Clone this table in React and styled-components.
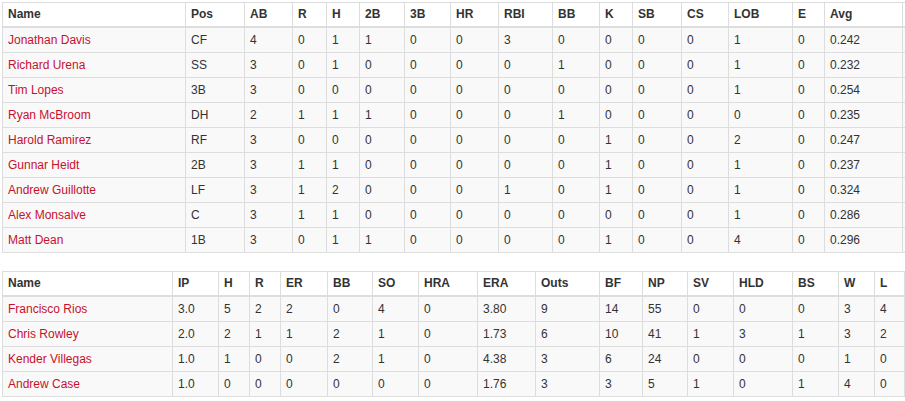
import React from "react";
import styled, { createGlobalStyle } from "styled-components";

const Global = createGlobalStyle`
  html, body { margin: 0; padding: 0; background: #fff; overflow: hidden; }
  body { font-family: "Liberation Sans", Arial, sans-serif; font-size: 12px; color: #333; }
`;

const Page = styled.div`
  padding: 2px 0 0 2px;
  display: flex;
  flex-direction: column;
  align-items: flex-start;
  gap: 18px;
`;

const Table = styled.table`
  border-collapse: collapse;
  table-layout: fixed;
  width: ${(p) => p.$width}px;
  border: 1px solid #ddd;
`;

const Th = styled.th`
  text-align: left;
  font-weight: bold;
  color: #333;
  background: #fff;
  padding: 4px 5px;
  line-height: 15px;
  border: 1px solid #ddd;
  border-bottom: 2px solid #ddd;
  white-space: nowrap;
  overflow: hidden;
`;

const Td = styled.td`
  padding: 4px 5px;
  line-height: 16px;
  background: #f9f9f9;
  border: 1px solid #ddd;
  white-space: nowrap;
  overflow: hidden;
`;

const PlayerLink = styled.a`
  color: #c8102e;
  text-decoration: none;
`;

const batHead = ["Name", "Pos", "AB", "R", "H", "2B", "3B", "HR", "RBI", "BB", "K", "SB", "CS", "LOB", "E", "Avg", ""];
const batWidths = [183, 59, 48, 34, 33, 45, 46, 48, 54, 47, 33, 49, 47, 64, 32, 78, 3];
const batRows = [
  ["Jonathan Davis", "CF", 4, 0, 1, 1, 0, 0, 3, 0, 0, 0, 0, 1, 0, "0.242"],
  ["Richard Urena", "SS", 3, 0, 1, 0, 0, 0, 0, 1, 0, 0, 0, 1, 0, "0.232"],
  ["Tim Lopes", "3B", 3, 0, 0, 0, 0, 0, 0, 0, 0, 0, 0, 1, 0, "0.254"],
  ["Ryan McBroom", "DH", 2, 1, 1, 1, 0, 0, 0, 1, 0, 0, 0, 0, 0, "0.235"],
  ["Harold Ramirez", "RF", 3, 0, 0, 0, 0, 0, 0, 0, 1, 0, 0, 2, 0, "0.247"],
  ["Gunnar Heidt", "2B", 3, 1, 1, 0, 0, 0, 0, 0, 1, 0, 0, 1, 0, "0.237"],
  ["Andrew Guillotte", "LF", 3, 1, 2, 0, 0, 0, 1, 0, 1, 0, 0, 1, 0, "0.324"],
  ["Alex Monsalve", "C", 3, 1, 1, 0, 0, 0, 0, 0, 0, 0, 0, 1, 0, "0.286"],
  ["Matt Dean", "1B", 3, 0, 1, 1, 0, 0, 0, 0, 1, 0, 0, 4, 0, "0.296"],
];

const pitHead = ["Name", "IP", "H", "R", "ER", "BB", "SO", "HRA", "ERA", "Outs", "BF", "NP", "SV", "HLD", "BS", "W", "L"];
const pitWidths = [170, 46, 31, 31, 47, 45, 46, 59, 58, 64, 43, 45, 46, 59, 46, 36, 30];
const pitRows = [
  ["Francisco Rios", "3.0", 5, 2, 2, 0, 4, 0, "3.80", 9, 14, 55, 0, 0, 0, 3, 4],
  ["Chris Rowley", "2.0", 2, 1, 1, 2, 1, 0, "1.73", 6, 10, 41, 1, 3, 1, 3, 2],
  ["Kender Villegas", "1.0", 1, 0, 0, 2, 1, 0, "4.38", 3, 6, 24, 0, 0, 0, 1, 0],
  ["Andrew Case", "1.0", 0, 0, 0, 0, 0, 0, "1.76", 3, 3, 5, 1, 0, 1, 4, 0],
];

function StatTable({ head, widths, rows, extra }) {
  const total = widths.reduce((a, b) => a + b, 0);
  return (
    <Table $width={total}>
      <colgroup>
        {widths.map((w, i) => (
          <col key={i} style={{ width: w }} />
        ))}
      </colgroup>
      <thead>
        <tr>
          {head.map((h, i) => (
            <Th key={i}>{h}</Th>
          ))}
        </tr>
      </thead>
      <tbody>
        {rows.map((r, ri) => (
          <tr key={ri}>
            {r.map((c, ci) => (
              <Td key={ci}>{ci === 0 ? <PlayerLink href="#">{c}</PlayerLink> : c}</Td>
            ))}
            {extra && <Td />}
          </tr>
        ))}
      </tbody>
    </Table>
  );
}

export default function App() {
  return (
    <>
      <Global />
      <Page>
        <StatTable head={batHead} widths={batWidths} rows={batRows} extra />
        <StatTable head={pitHead} widths={pitWidths} rows={pitRows} />
      </Page>
    </>
  );
}
